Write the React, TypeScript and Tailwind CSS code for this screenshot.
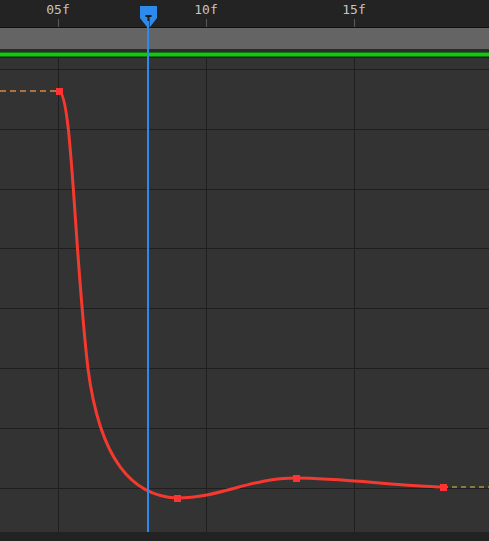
import React from 'react';

const ticks = [
  { x: 58, label: '05f' },
  { x: 206, label: '10f' },
  { x: 354, label: '15f' },
];

const rows = [11, 71, 131, 190, 250, 310, 370, 430];

export default function App() {
  return (
    <div className="relative w-[489px] h-[541px] overflow-hidden bg-[#333333] flex flex-col select-none">
      {/* ruler */}
      <div className="relative h-[28px] bg-[#232323] border-b border-[#111111] shrink-0">
        {ticks.map((t) => (
          <div key={t.label} className="absolute top-0 h-full" style={{ left: t.x }}>
            <span
              className="absolute top-[2px] -translate-x-1/2 text-[13px] leading-[15px] text-[#c4c4c4]"
              style={{ fontFamily: '"DejaVu Sans Mono", "Liberation Mono", monospace' }}
            >
              {t.label}
            </span>
            <div className="absolute bottom-0 left-0 w-px h-[8px] bg-[#5a5a5a]" />
          </div>
        ))}
      </div>

      {/* work area bar */}
      <div className="h-[21px] bg-[#646464] shrink-0" />
      <div className="h-[3px] bg-[#2b2b2b] shrink-0" />
      <div className="h-[5px] bg-[#19c419] border-y border-[#0e7a0e] shrink-0" />
      <div className="h-px bg-[#1a1a1a] shrink-0" />

      {/* graph */}
      <div className="relative flex-1">
        <svg className="absolute inset-0" width="489" height="474" viewBox="0 0 489 474">
          {rows.map((y) => (
            <line key={y} x1="0" x2="489" y1={y + 0.5} y2={y + 0.5} stroke="#1f1f1f" strokeWidth="1" />
          ))}
          {ticks.map((t) => (
            <line key={t.x} x1={t.x + 0.5} x2={t.x + 0.5} y1="0" y2="474" stroke="#1f1f1f" strokeWidth="1" />
          ))}
          <line x1="0" x2="59" y1="33" y2="33" stroke="#b0723c" strokeWidth="2" strokeDasharray="6 4" />
          <line x1="443" x2="489" y1="429" y2="429" stroke="#8a7a3c" strokeWidth="2" strokeDasharray="5 4" />
          <path
            d="M59 33 C72 36 74 190 88 311 C100 402 132 438 177 440 C220 440 250 420 296 420 C340 420 400 428 443 429"
            fill="none"
            stroke="#f5392f"
            strokeWidth="3"
          />
          <rect x="56" y="30" width="7" height="7" fill="#ff3333" />
          <rect x="174" y="437" width="7" height="7" fill="#ff3333" />
          <rect x="293" y="417" width="7" height="7" fill="#ff3333" />
          <rect x="440" y="426" width="7" height="7" fill="#ff3333" />
        </svg>
      </div>

      {/* bottom bar */}
      <div className="h-[9px] bg-[#222222] shrink-0" />

      {/* playhead */}
      <div className="absolute top-[6px] left-[139px] w-[19px] h-[526px] pointer-events-none">
        <svg width="19" height="22" viewBox="0 0 19 22" className="absolute top-0 left-0">
          <path d="M1 0 H18 V12 L11 21 H8 L1 12 Z" fill="#2d8ceb" />
          <rect x="6.5" y="9" width="6" height="2" fill="#1a1a1a" />
          <rect x="8.5" y="9" width="2" height="12" fill="#1a1a1a" />
        </svg>
        <div className="absolute top-[15px] left-[8px] w-[2px] bottom-0 bg-[#2d8ceb]" />
      </div>
    </div>
  );
}
